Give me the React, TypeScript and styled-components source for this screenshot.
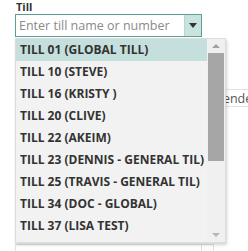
import styled, { createGlobalStyle } from 'styled-components'

const tills = [
  'TILL 01 (GLOBAL TILL)',
  'TILL 10 (STEVE)',
  'TILL 16 (KRISTY )',
  'TILL 20 (CLIVE)',
  'TILL 22 (AKEIM)',
  'TILL 23 (DENNIS - GENERAL TIL)',
  'TILL 25 (TRAVIS - GENERAL TIL)',
  'TILL 34 (DOC - GLOBAL)',
  'TILL 37 (LISA TEST)',
]

const GlobalStyle = createGlobalStyle`
  html, body {
    margin: 0;
    background: #fff;
    font-family: 'Open Sans', 'Liberation Sans', sans-serif;
    overflow: hidden;
  }
`

const App = () => {
  return (
    <Page>
      <GlobalStyle />
      <Label>Till</Label>
      <Combo>
        <ComboInput placeholder='Enter till name or number' />
        <ComboButton>
          <Caret />
        </ComboButton>
      </Combo>
      <BehindRow>
        <BehindField>Tendered</BehindField>
      </BehindRow>
      <BottomRow>
        <BottomField />
        <BottomButton />
      </BottomRow>

      <Dropdown>
        <List>
          {tills.map((t, i) => (
            <Item key={t} active={i === 0}>
              {t}
            </Item>
          ))}
        </List>
        <Scrollbar>
          <ScrollArrow>
            <ArrowUp />
          </ScrollArrow>
          <Thumb />
          <Track />
          <ScrollArrow>
            <ArrowDown />
          </ScrollArrow>
        </Scrollbar>
      </Dropdown>
    </Page>
  )
}

export default App

const Page = styled.div`
  position: relative;
  width: 248px;
  height: 251px;
  padding: 1px 0 0 15px;
  box-sizing: border-box;
  overflow: hidden;
`

const Label = styled.div`
  font-size: 11px;
  font-weight: 700;
  color: #333;
  line-height: 12px;
  margin-left: 1px;
`

const Combo = styled.div`
  display: flex;
  width: 187px;
  height: 23px;
  margin-top: 1px;
  border: 1px solid #5e9d96;
  box-sizing: border-box;
`

const ComboInput = styled.input`
  flex: 1;
  min-width: 0;
  border: none;
  outline: none;
  padding: 0 3px;
  font-family: 'Open Sans', 'Liberation Sans', sans-serif;
  font-size: 12.5px;
  color: #333;
  &::placeholder {
    color: #8a8a8a;
  }
`

const ComboButton = styled.div`
  width: 16px;
  background: #c9e3df;
  border-left: 1px solid #b9d6d1;
  display: flex;
  align-items: center;
  justify-content: center;
`

const Caret = styled.div`
  width: 0;
  height: 0;
  border-left: 4px solid transparent;
  border-right: 4px solid transparent;
  border-top: 5px solid #333;
`

const BehindRow = styled.div`
  display: flex;
  margin-top: 52px;
  padding-left: 143px;
`

const BehindField = styled.div`
  flex: none;
  width: 120px;
  height: 18px;
  border: 1px solid #e2e2e2;
  font-size: 12.5px;
  line-height: 18px;
  color: #555;
  padding-left: 57px;
  box-sizing: border-box;
  background: #fff;
  white-space: nowrap;
`

const BottomRow = styled.div`
  display: flex;
  margin-top: 137px;
  height: 20px;
`

const BottomField = styled.div`
  width: 185px;
  border: 1px solid #e2e2e2;
  border-right: none;
`

const BottomButton = styled.div`
  width: 11px;
  border: 1px solid #e2e2e2;
`

const Dropdown = styled.div`
  position: absolute;
  left: 15px;
  top: 38px;
  width: 211px;
  height: 205px;
  display: flex;
  background: #f2f2f2;
  border: 1px solid #dcdcdc;
  box-sizing: border-box;
  box-shadow: 1px 2px 3px rgba(0, 0, 0, 0.18);
`

const List = styled.div`
  flex: 1;
  display: flex;
  flex-direction: column;
`

const Item = styled.div<{ active: boolean }>`
  height: 22px;
  line-height: 22px;
  padding-left: 4px;
  font-size: 12px;
  font-weight: 700;
  color: #333;
  white-space: nowrap;
  background: ${(p) => (p.active ? '#c5e0dc' : 'transparent')};
`

const Scrollbar = styled.div`
  width: 18px;
  display: flex;
  flex-direction: column;
  background: #f0f0f0;
`

const ScrollArrow = styled.div`
  height: 14px;
  display: flex;
  align-items: center;
  justify-content: center;
`

const ArrowUp = styled.div`
  width: 0;
  height: 0;
  border-left: 4px solid transparent;
  border-right: 4px solid transparent;
  border-bottom: 4px solid #a3a3a3;
`

const ArrowDown = styled(ArrowUp)`
  border-bottom: none;
  border-top: 4px solid #b5b5b5;
`

const Thumb = styled.div`
  height: 108px;
  margin: 0 1px;
  background: #a6a6a6;
`

const Track = styled.div`
  flex: 1;
`
